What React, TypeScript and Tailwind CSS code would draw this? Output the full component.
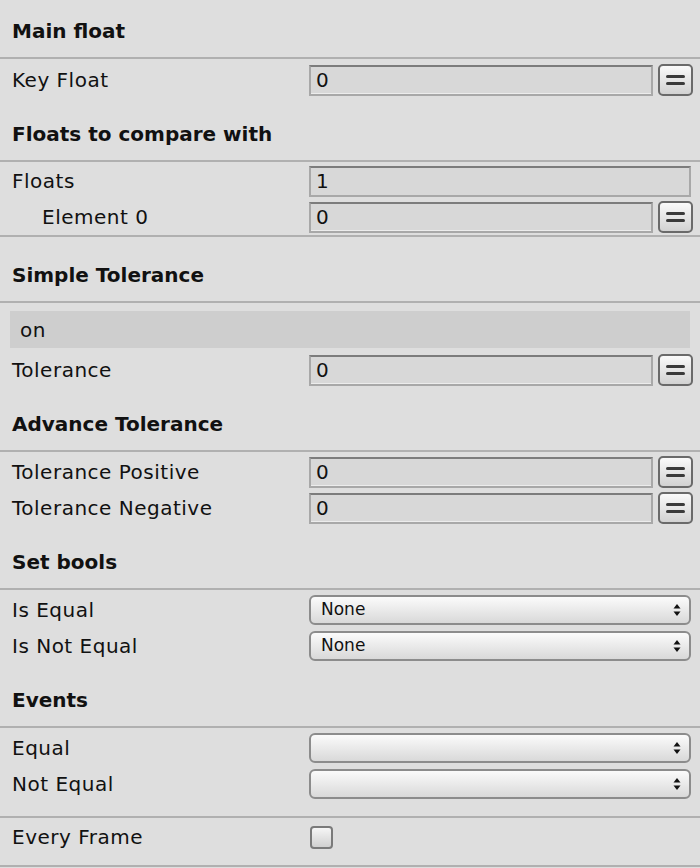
import React from "react";

const font = { fontFamily: '"DejaVu Sans", "Liberation Sans", sans-serif' };

function Header({ title, top }: { title: string; top: string }) {
  return (
    <div className={`flex flex-col ${top}`}>
      <div className="h-[52px] flex items-center px-3 text-[20px] font-bold text-[#111]">{title}</div>
      <div className="h-[2px] bg-[#b0b0b0]" />
    </div>
  );
}

function Sep() {
  return <div className="h-[2px] bg-[#b0b0b0]" />;
}

function Label({ text, indent }: { text: string; indent?: boolean }) {
  return (
    <div className={`w-[309px] shrink-0 text-[20px] tracking-[0.5px] text-[#111] ${indent ? "pl-[42px]" : "pl-3"}`}>{text}</div>
  );
}

function EqButton() {
  return (
    <div className="ml-[5px] w-[35px] h-[32px] rounded-[5px] border-2 border-[#6a6a6a] bg-gradient-to-b from-[#fafafa] to-[#d2d2d2] flex flex-col items-center justify-center gap-[4px]">
      <div className="w-[19px] h-[3px] rounded-full bg-[#3a3a3a]" />
      <div className="w-[19px] h-[3px] rounded-full bg-[#3a3a3a]" />
    </div>
  );
}

function Field({ value, eq = true }: { value: string; eq?: boolean }) {
  return (
    <div className="flex-1 flex items-center pr-[7px]">
      <div className="flex-1 h-[31px] border-2 border-[#a8a8a8] border-t-[#7c7c7c] bg-[#d8d8d8] flex items-center pl-[5px] text-[20px] text-[#111] shadow-[inset_0_-1px_0_#ececec]">
        {value}
      </div>
      {eq && <EqButton />}
    </div>
  );
}

function Row({ label, value, eq = true, indent }: { label: string; value: string; eq?: boolean; indent?: boolean }) {
  return (
    <div className="h-[36px] flex items-center">
      <Label text={label} indent={indent} />
      {eq ? <Field value={value} /> : (
        <div className="flex-1 flex items-center pr-[9px]">
          <div className="flex-1 h-[31px] border-2 border-[#a8a8a8] border-t-[#7c7c7c] bg-[#d8d8d8] flex items-center pl-[5px] text-[20px] text-[#111]">
            {value}
          </div>
        </div>
      )}
    </div>
  );
}

function Arrows() {
  return (
    <svg width="8" height="14" viewBox="0 0 8 14">
      <path d="M4 1 L7.5 5.5 L0.5 5.5 Z" fill="#111" />
      <path d="M4 13 L7.5 8.5 L0.5 8.5 Z" fill="#111" />
    </svg>
  );
}

function Dropdown({ label, value }: { label: string; value: string }) {
  return (
    <div className="h-[36px] flex items-center">
      <Label text={label} />
      <div className="flex-1 pr-[9px]">
        <div className="h-[30px] rounded-[6px] border-2 border-[#8c8c8c] bg-gradient-to-b from-[#fbfbfb] to-[#d9d9d9] flex items-center justify-between pl-[10px] pr-[8px] text-[17px] text-[#111]">
          <span>{value}</span>
          <Arrows />
        </div>
      </div>
    </div>
  );
}

export default function App() {
  return (
    <div className="w-[700px] h-[868px] bg-[#dedede] overflow-hidden" style={font}>
      <Header title="Main float" top="pt-[5px]" />
      <div className="pt-[3px]">
        <Row label="Key Float" value="0" />
      </div>
      <Header title="Floats to compare with" top="pt-[10px]" />
      <div className="pt-[1px]">
        <Row label="Floats" value="1" eq={false} />
        <Row label="Element 0" value="0" indent />
      </div>
      <Sep />
      <Header title="Simple Tolerance" top="pt-[12px]" />
      <div className="px-[10px] pt-[8px]">
        <div className="h-[37px] bg-[#cecece] flex items-center pl-[10px] text-[20px] tracking-[0.5px] text-[#111]">on</div>
      </div>
      <div className="pt-[4px]">
        <Row label="Tolerance" value="0" />
      </div>
      <Header title="Advance Tolerance" top="pt-[10px]" />
      <div className="pt-[2px]">
        <Row label="Tolerance Positive" value="0" />
        <Row label="Tolerance Negative" value="0" />
      </div>
      <Header title="Set bools" top="pt-[10px]" />
      <div className="pt-[2px]">
        <Dropdown label="Is Equal" value="None" />
        <Dropdown label="Is Not Equal" value="None" />
      </div>
      <Header title="Events" top="pt-[10px]" />
      <div className="pt-[2px]">
        <Dropdown label="Equal" value="" />
        <Dropdown label="Not Equal" value="" />
      </div>
      <div className="pt-[14px]">
        <Sep />
      </div>
      <div className="h-[38px] flex items-center">
        <Label text="Every Frame" />
        <div className="w-[23px] h-[23px] ml-[1px] rounded-[4px] border-2 border-[#7a7a7a] bg-gradient-to-b from-[#f6f6f6] to-[#d0d0d0]" />
      </div>
      <div className="pt-[9px]">
        <Sep />
      </div>
    </div>
  );
}
